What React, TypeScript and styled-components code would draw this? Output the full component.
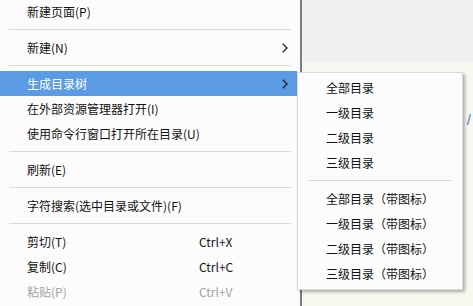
import React from "react";
import styled, { createGlobalStyle } from "styled-components";

const Global = createGlobalStyle`
  html, body {
    margin: 0;
    padding: 0;
    overflow: hidden;
    background: #f7f6ef;
  }
  * {
    box-sizing: border-box;
  }
`;

const Screen = styled.div`
  position: relative;
  display: flex;
  width: 473px;
  height: 306px;
  font-family: "Noto Sans CJK SC", "Microsoft YaHei", sans-serif;
  font-size: 12px;
  color: #111;
`;

const Menu = styled.div`
  display: flex;
  flex-direction: column;
  width: 300px;
  flex: none;
  margin-top: -1px;
  background: #fcfcfc;
`;

const Item = styled.div<{ $active?: boolean; $disabled?: boolean }>`
  display: flex;
  align-items: center;
  height: 25px;
  flex: none;
  margin-right: 3px;
  padding: 0 9px 0 27px;
  background: ${(p) => (p.$active ? "#5a9be3" : "transparent")};
  color: ${(p) => (p.$active ? "#fff" : p.$disabled ? "#a3a3a3" : "#111")};
  white-space: nowrap;
`;

const Label = styled.span`
  width: 172px;
  flex: none;
`;

const Shortcut = styled.span`
  flex: 1;
`;

const Arrow = styled.svg`
  margin-left: auto;
  width: 6px;
  height: 10px;
`;

const Sep = styled.div<{ $inset: number }>`
  height: 11px;
  flex: none;
  display: flex;
  align-items: center;
  padding: 0 ${(p) => p.$inset}px;

  &::after {
    content: "";
    flex: 1;
    height: 1px;
    background: #d9d9d9;
  }
`;

const Backdrop = styled.div`
  flex: 1;
  display: flex;
  flex-direction: column;
  border-left: 2px solid #7c7c7c;
  box-shadow: inset 1px 0 0 #b0b0b0;
`;

const Toolbar = styled.div`
  height: 62px;
  background: #f0f0f0;
`;

const Pane = styled.div`
  flex: 1;
  display: flex;
  justify-content: flex-end;
  padding: 50px 2px 0 0;
  background: #f8f7f0;
`;

const Slash = styled.span`
  font-family: "Liberation Sans", sans-serif;
  font-size: 15px;
  line-height: 16px;
  height: 16px;
  color: #4a7ed0;
`;

const SubMenu = styled.div`
  position: absolute;
  left: 297px;
  top: 72px;
  width: 166px;
  padding: 2px 0 3px;
  display: flex;
  flex-direction: column;
  background: #fcfcfc;
  border: 1px solid #dadada;
  box-shadow: 2px 2px 3px rgba(0, 0, 0, 0.3);
`;

const SubItem = styled.div`
  display: flex;
  align-items: center;
  height: 25px;
  padding-left: 28px;
  white-space: nowrap;
`;

const Chevron = () => (
  <Arrow viewBox="0 0 6 10">
    <path d="M0.8 0.8 L5 5 L0.8 9.2" fill="none" stroke="#222" strokeWidth="1.3" />
  </Arrow>
);

const subPlain = ["全部目录", "一级目录", "二级目录", "三级目录"];

export default function App() {
  return (
    <>
      <Global />
      <Screen>
        <Menu>
          <Item>新建页面(P)</Item>
          <Sep $inset={9} />
          <Item>
            新建(N)
            <Chevron />
          </Item>
          <Sep $inset={9} />
          <Item $active>
            生成目录树
            <Chevron />
          </Item>
          <Item>在外部资源管理器打开(I)</Item>
          <Item>使用命令行窗口打开所在目录(U)</Item>
          <Sep $inset={9} />
          <Item>刷新(E)</Item>
          <Sep $inset={9} />
          <Item>字符搜索(选中目录或文件)(F)</Item>
          <Sep $inset={9} />
          <Item>
            <Label>剪切(T)</Label>
            <Shortcut>Ctrl+X</Shortcut>
          </Item>
          <Item>
            <Label>复制(C)</Label>
            <Shortcut>Ctrl+C</Shortcut>
          </Item>
          <Item $disabled>
            <Label>粘贴(P)</Label>
            <Shortcut>Ctrl+V</Shortcut>
          </Item>
        </Menu>
        <Backdrop>
          <Toolbar />
          <Pane>
            <Slash>/</Slash>
          </Pane>
        </Backdrop>
        <SubMenu>
          {subPlain.map((t) => (
            <SubItem key={t}>{t}</SubItem>
          ))}
          <Sep $inset={10} />
          {subPlain.map((t) => (
            <SubItem key={t + "i"}>{t}（带图标）</SubItem>
          ))}
        </SubMenu>
      </Screen>
    </>
  );
}
